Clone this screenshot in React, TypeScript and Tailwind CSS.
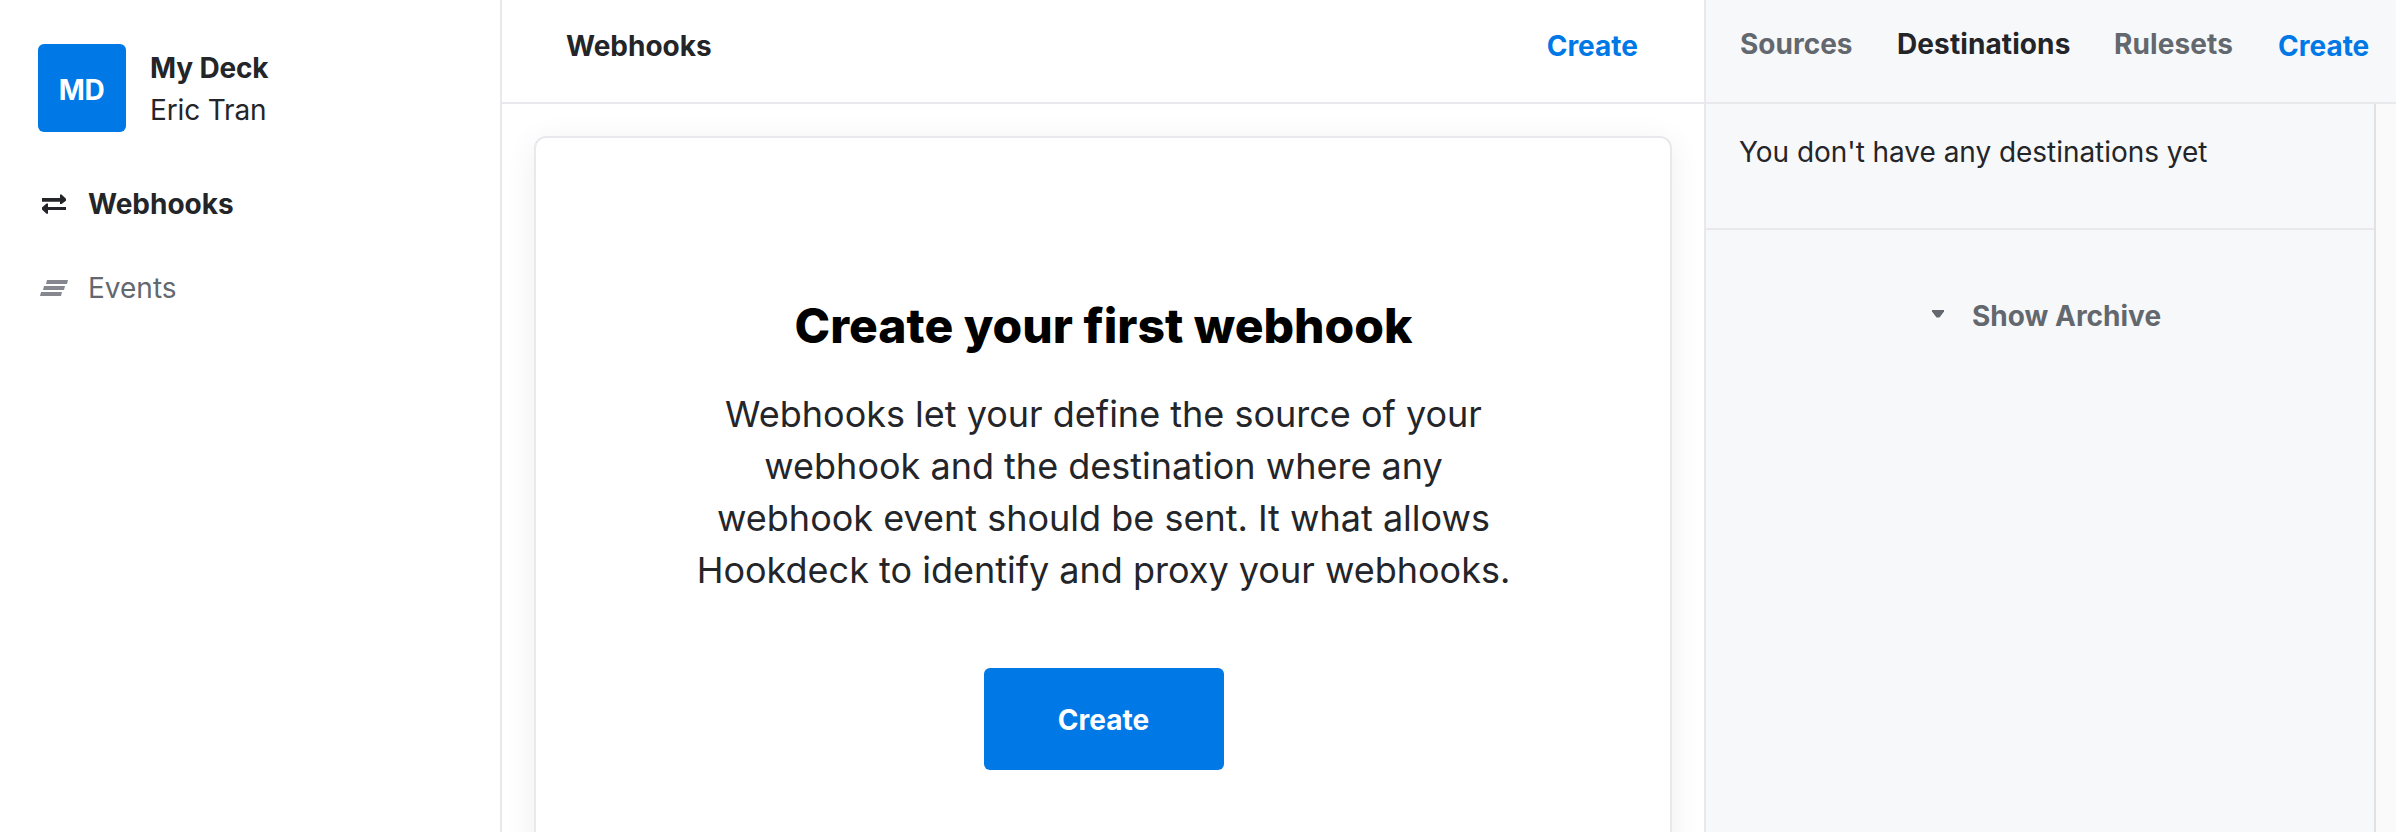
import React from "react";

function SwapIcon() {
  return (
    <svg width="24" height="20" viewBox="0 0 24 20" fill="currentColor" className="ml-1 shrink-0">
      <path d="M0 4h18V0.500h1.500L24 4.800v2L19.500 10H18V7.700H0z" />
      <path d="M24 13v3H6V19.800H4.500L0 15.500v-2L4.500 9.500H6V13z" />
    </svg>
  );
}

function EventsIcon() {
  return (
    <svg width="28" height="16" viewBox="0 0 28 16" fill="currentColor" className="shrink-0">
      <path d="M7 0h21l-1 4H6z" />
      <path d="M4 6h21l-1 4H3z" />
      <path d="M1 12h21l-1 4H0z" />
    </svg>
  );
}

function Sidebar() {
  return (
    <aside className="flex w-[502px] shrink-0 flex-col border-r-2 border-[#e9e9ed] bg-white pl-[38px] pt-11">
      <div className="flex h-[88px] items-center">
        <div className="flex size-[88px] items-center justify-center rounded-[6px] bg-[#0079e7] pr-px pt-1 text-[28px] font-bold tracking-[-0.5px] text-white">
          MD
        </div>
        <div className="ml-6 pt-[2px] text-[28px] leading-[42px] tracking-[-0.15px]">
          <div className="font-bold">My Deck</div>
          <div>Eric Tran</div>
        </div>
      </div>
      <nav className="mt-[51px] flex flex-col gap-[42px] text-[28px] leading-[42px]">
        <a className="flex items-center font-bold">
          <span className="flex w-[50px]"><SwapIcon /></span>
          Webhooks
        </a>
        <a className="flex items-center text-[#63686f]">
          <span className="flex w-[50px] pl-0.5 text-[#85898f]"><EventsIcon /></span>
          Events
        </a>
      </nav>
    </aside>
  );
}

function WebhooksPane() {
  return (
    <main className="flex w-[1204px] shrink-0 flex-col border-r-2 border-[#e9e9ed] bg-white">
      <header className="flex h-[104px] shrink-0 items-start justify-between border-b-2 border-[#e9e9ed] pl-16 pr-[66px] pt-[25px] text-[28px] font-bold leading-[42px]">
        <h1>Webhooks</h1>
        <button className="text-[#0079e7]">Create</button>
      </header>
      <div className="flex flex-1 flex-col overflow-hidden px-8 pt-8">
        <section className="flex h-[800px] shrink-0 flex-col items-center rounded-[12px] border-2 border-[#e9e9ed] pt-[156px] shadow-[0_6px_32px_rgba(0,0,0,0.07)]">
          <h2 className="pl-px text-[48px] font-extrabold leading-[64px] text-black">Create your first webhook</h2>
          <p className="ml-px mt-[30px] w-[860px] text-center text-[36px] leading-[52px]">
            Webhooks let your define the source of your<br />
            webhook and the destination where any<br />
            webhook event should be sent. It what allows<br />
            Hookdeck to identify and proxy your webhooks.
          </p>
          <button className="ml-0.5 mt-[72px] flex h-[102px] w-60 items-center justify-center rounded-[6px] bg-[#0079e7] pr-px pt-0.5 text-[28px] font-bold text-white">
            Create
          </button>
        </section>
      </div>
    </main>
  );
}

function DestinationsPane() {
  return (
    <aside className="flex min-w-0 flex-1 flex-col bg-[#f7f8fa]">
      <header className="flex h-[104px] shrink-0 items-start border-b-2 border-[#e9e9ed] pl-[34px] pt-[23px] text-[28px] font-bold leading-[42px] text-[#63686f]">
        <a className="w-[157px]">Sources</a>
        <a className="w-[217px] tracking-[0.1px] text-[#242529]">Destinations</a>
        <a className="w-[164px] tracking-[0.1px]">Rulesets</a>
        <button className="pt-0.5 text-[#0079e7]">Create</button>
      </header>
      <div className="flex flex-1">
        <div className="flex flex-1 flex-col">
          <p className="h-[126px] border-b-2 border-[#e9e9ed] pl-[33px] pt-[27px] text-[28px] leading-[42px] tracking-[-0.04px]">
            You don't have any destinations yet
          </p>
          <button className="mt-[65px] flex items-center pl-[226px] text-[28px] font-bold leading-[42px] text-[#63686f]">
            <svg width="12" height="8" viewBox="0 0 12 8" fill="currentColor" className="mb-1 mr-7">
              <path d="M0 0h12v1.500L7.500 7.500h-3L0 1.500z" />
            </svg>
            Show Archive
          </button>
        </div>
        <div className="w-[22px] border-l-2 border-[#e1e1e1] bg-[#fafafa]" />
      </div>
    </aside>
  );
}

export default function App() {
  return (
    <div className="flex h-[832px] w-[2396px] overflow-hidden font-['Inter',sans-serif] text-[#242529]">
      <Sidebar />
      <WebhooksPane />
      <DestinationsPane />
    </div>
  );
}
